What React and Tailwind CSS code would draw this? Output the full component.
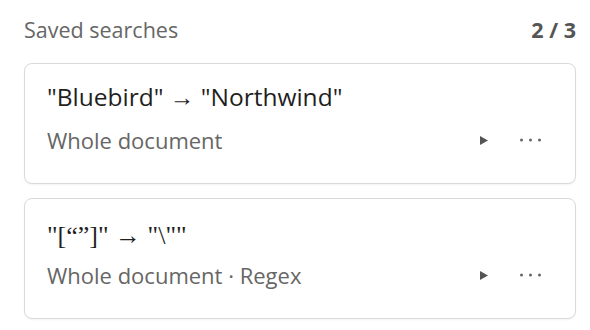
import React from "react";

const searches = [
  { id: 1, title: "\"Bluebird\" → \"Northwind\"", scope: "Whole document", serif: false },
  { id: 2, title: "\"[“”]\" → \"\\\"\"", scope: "Whole document · Regex", serif: true },
];

function PlayIcon() {
  return (
    <svg width="8" height="9" viewBox="0 0 8 9" className="block">
      <path d="M0 0 L8 4.5 L0 9 Z" fill="#555" />
    </svg>
  );
}

function MoreIcon() {
  return (
    <svg width="21" height="4" viewBox="0 0 21 4" className="block">
      <circle cx="1.5" cy="2" r="1.5" fill="#666" />
      <circle cx="10.5" cy="2" r="1.5" fill="#666" />
      <circle cx="19.5" cy="2" r="1.5" fill="#666" />
    </svg>
  );
}

function SearchCard({ search }) {
  // regex titles fall back to a serif face and sit a little lower
  const titleCls = search.serif
    ? "font-['Liberation_Serif',serif] text-[26px] pt-[5px] pb-[1px]"
    : "font-['Open_Sans',sans-serif] text-[24.5px] pt-px";
  return (
    <div className="rounded-lg border border-[#d9d9d9] bg-white pl-[22px] pr-[34px] pt-4 pb-[29px] shadow-[0_1px_2px_rgba(0,0,0,0.05)]">
      <div className={`${titleCls} leading-[32px] text-[#1f1f1f]`}>
        {search.title}
      </div>
      <div className={`${search.serif ? "mt-[8px]" : "mt-[13px]"} flex items-center justify-between`}>
        <span className="text-[22px] leading-[28px] text-[#666]">{search.scope}</span>
        <div className="flex items-center gap-[32px]">
          <PlayIcon />
          <MoreIcon />
        </div>
      </div>
    </div>
  );
}

export default function App() {
  return (
    <div className="h-[330px] w-[590px] bg-white pl-6 pr-[14px] pt-4 font-['Open_Sans',sans-serif]">
      <div className="flex items-center justify-between">
        <span className="text-[21.5px] leading-[28px] text-[#666]">Saved searches</span>
        <span className="text-[21.5px] font-bold leading-[28px] text-[#555]">2 / 3</span>
      </div>
      <div className="mt-[19px] flex flex-col gap-[14px]">
        {searches.map((s) => (
          <SearchCard key={s.id} search={s} />
        ))}
      </div>
    </div>
  );
}
